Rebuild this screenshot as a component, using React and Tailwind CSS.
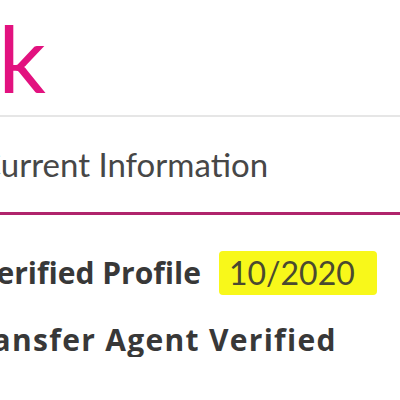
export default function App() {
  return (
    <div className="w-[400px] h-[400px] overflow-hidden bg-white text-[#383838]" style={{ fontFamily: 'Lato, "Open Sans", sans-serif' }}>
      {/* tier heading, cropped on the left */}
      <div className="h-[115px] flex items-end overflow-hidden">
        <span className="shrink-0 -ml-[133px] mb-[11px] text-[94px] leading-none text-[#e2127f]">Pink</span>
      </div>
      <div className="h-[2px] bg-[#e6e6e6]" />

      {/* section title */}
      <div className="h-[95px] flex items-center overflow-hidden">
        <span className="shrink-0 -ml-[21px] text-[33px] leading-none text-[#474747]">Current Information</span>
      </div>
      <div className="h-[3px] bg-[#b0246c]" />

      {/* verification rows */}
      <div className="flex flex-col pt-[36px] gap-[30px] overflow-hidden" style={{ fontFamily: '"Open Sans", Lato, sans-serif' }}>
        <div className="flex items-center -ml-[23px]">
          <span className="shrink-0 text-[30px] font-bold leading-none">Verified Profile</span>
          <span className="shrink-0 ml-[18px] pl-[10px] pr-[22px] py-[6px] bg-[#f8f81a] rounded-[4px] text-[32px] leading-none text-[#4a4a30]" style={{ fontFamily: 'Lato, sans-serif' }}>10/2020</span>
        </div>
        <div className="-ml-[41px]">
          <span className="text-[30px] font-bold leading-none tracking-[1.3px] whitespace-nowrap">Transfer Agent Verified</span>
        </div>
      </div>
    </div>
  )
}
